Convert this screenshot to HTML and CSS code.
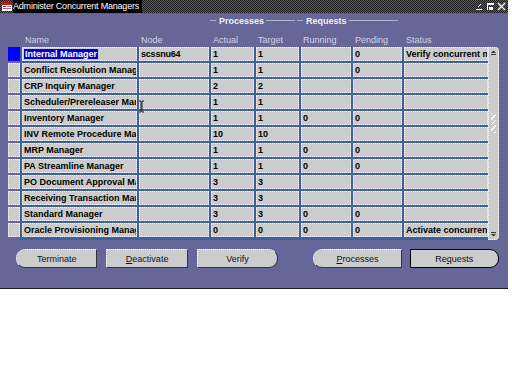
FILE: index.html
```html
<!DOCTYPE html>
<html lang="en">

<head>
    <meta charset="UTF-8">
    <title>Administer Concurrent Managers</title>
    <link rel="stylesheet" href="styles.css">
</head>

<body>
    <div class="window">
        <div class="titlebar">
            <svg class="title-icon" width="10" height="9" viewBox="0 0 10 9">
                <rect x="0" y="0" width="10" height="9" fill="#ffffff"/>
                <rect x="0" y="0" width="10" height="3" fill="#d01010"/>
                <rect x="1" y="4" width="3" height="1" fill="#d01010"/>
                <rect x="5" y="4" width="4" height="1" fill="#808080"/>
                <rect x="1" y="6" width="8" height="1" fill="#808080"/>
            </svg>
            <span class="title">Administer Concurrent Managers</span>
            <div class="controls">
                <svg width="9" height="9" viewBox="0 0 9 9"><rect x="1" y="7" width="6" height="1" fill="#fff"/><path d="M6 2 L3 5" stroke="#fff" stroke-width="1"/></svg>
                <svg width="9" height="9" viewBox="0 0 9 9"><rect x="1" y="1" width="7" height="2" fill="#fff"/><rect x="1" y="3" width="1" height="5" fill="#fff"/><rect x="3" y="5" width="4" height="3" fill="#fff"/></svg>
                <svg width="9" height="9" viewBox="0 0 9 9"><path d="M1 1 L8 8 M8 1 L1 8" stroke="#fff" stroke-width="1.4"/></svg>
            </div>
        </div>

        <div class="head">
            <div class="group processes"><span class="dash"></span><span class="group-name">Processes</span><span class="line"></span></div>
            <div class="group requests"><span class="dash"></span><span class="group-name">Requests</span><span class="line"></span></div>

            <div class="label-spacer"></div>
            <div class="label name-col">Name</div>
            <div class="label">Node</div>
            <div class="label">Actual</div>
            <div class="label">Target</div>
            <div class="label">Running</div>
            <div class="label">Pending</div>
            <div class="label">Status</div>
        </div>

        <div class="rows">
            <div class="indicators">
                <div class="ind current"></div>
                <div class="ind"></div><div class="ind"></div><div class="ind"></div>
                <div class="ind"></div><div class="ind"></div><div class="ind"></div>
                <div class="ind"></div><div class="ind"></div><div class="ind"></div>
                <div class="ind"></div><div class="ind"></div>
            </div>

            <div class="table">
                <div class="cell"><span class="sel">Internal Manager</span></div><div class="cell node">scssnu64</div><div class="cell">1</div><div class="cell">1</div><div class="cell"></div><div class="cell">0</div><div class="cell">Verify concurrent managers status</div>
                <div class="cell">Conflict Resolution Manager</div><div class="cell"></div><div class="cell">1</div><div class="cell">1</div><div class="cell"></div><div class="cell">0</div><div class="cell"></div>
                <div class="cell">CRP Inquiry Manager</div><div class="cell"></div><div class="cell">2</div><div class="cell">2</div><div class="cell"></div><div class="cell"></div><div class="cell"></div>
                <div class="cell">Scheduler/Prereleaser Manager</div><div class="cell"></div><div class="cell">1</div><div class="cell">1</div><div class="cell"></div><div class="cell"></div><div class="cell"></div>
                <div class="cell">Inventory Manager</div><div class="cell"></div><div class="cell">1</div><div class="cell">1</div><div class="cell">0</div><div class="cell">0</div><div class="cell"></div>
                <div class="cell">INV Remote Procedure Manager</div><div class="cell"></div><div class="cell">10</div><div class="cell">10</div><div class="cell"></div><div class="cell"></div><div class="cell"></div>
                <div class="cell">MRP Manager</div><div class="cell"></div><div class="cell">1</div><div class="cell">1</div><div class="cell">0</div><div class="cell">0</div><div class="cell"></div>
                <div class="cell">PA Streamline Manager</div><div class="cell"></div><div class="cell">1</div><div class="cell">1</div><div class="cell">0</div><div class="cell">0</div><div class="cell"></div>
                <div class="cell">PO Document Approval Manager</div><div class="cell"></div><div class="cell">3</div><div class="cell">3</div><div class="cell"></div><div class="cell"></div><div class="cell"></div>
                <div class="cell">Receiving Transaction Manager</div><div class="cell"></div><div class="cell">3</div><div class="cell">3</div><div class="cell"></div><div class="cell"></div><div class="cell"></div>
                <div class="cell">Standard Manager</div><div class="cell"></div><div class="cell">3</div><div class="cell">3</div><div class="cell">0</div><div class="cell">0</div><div class="cell"></div>
                <div class="cell">Oracle Provisioning Manager</div><div class="cell"></div><div class="cell">0</div><div class="cell">0</div><div class="cell">0</div><div class="cell">0</div><div class="cell">Activate concurrent manager</div>
            </div>

            <div class="scrollbar">
                <svg class="arrow" width="9" height="7" viewBox="0 0 9 7"><path d="M2 4 L4.5 1.5 L7 4 Z" fill="#333"/><rect x="2" y="5" width="5" height="1" fill="#333"/></svg>
                <div class="grip"></div>
                <svg class="arrow down" width="9" height="7" viewBox="0 0 9 7"><rect x="2" y="1" width="5" height="1" fill="#333"/><path d="M2 3 L4.5 5.5 L7 3 Z" fill="#333"/></svg>
            </div>
        </div>

        <div class="buttons">
            <button class="btn first">Terminate</button>
            <button class="btn"><u>D</u>eactivate</button>
            <button class="btn last">Verify</button>
            <button class="btn first right-group"><u>P</u>rocesses</button>
            <button class="btn last default">Re<u>q</u>uests</button>
        </div>

        <svg class="cursor" width="7" height="13" viewBox="0 0 7 13">
            <path d="M1 1 H3 V12 H1 M6 1 H4 V12 H6" stroke="#222" stroke-width="1" fill="none"/>
        </svg>
    </div>
</body>

</html>
```

FILE: styles.css
```css
body {
    margin: 0;
    background-color: #ffffff;
    font-family: "Liberation Sans", Arial, sans-serif;
}

.window {
    position: relative;
    width: 508px;
    height: 288px;
    background-color: #666699;
    border-bottom: 1px solid #1a1a1a;
}

.titlebar {
    display: flex;
    align-items: center;
    height: 13px;
    background: repeating-conic-gradient(#5c5c5c 0 25%, #1c1c1c 0 50%) 0 0 / 2px 2px;
    border-bottom: 1px solid #3a7480;
}

.title-icon {
    margin: 0 1px 0 2px;
}

.title {
    background-color: #000000;
    color: #ffffff;
    font-size: 9px;
    line-height: 13px;
    padding-right: 3px;
    letter-spacing: -0.2px;
}

.controls {
    display: flex;
    gap: 2px;
    margin-left: auto;
    margin-right: 2px;
}

.head {
    display: grid;
    grid-template-columns: 12px 115px 70px 43px 43px 50px 49px 84px;
    grid-template-rows: 11px 12px;
    column-gap: 2px;
    row-gap: 8px;
    margin: 1px 0 0 8px;
}

.group {
    grid-row: 1;
    display: flex;
    align-items: center;
    color: #f0f0f8;
    font-size: 9px;
    font-weight: bold;
    margin-left: -1px;
}

.processes {
    grid-column: 4 / 6;
}

.requests {
    grid-column: 6 / 8;
    margin-left: -4px;
}

.dash {
    width: 6px;
    height: 1px;
    background-color: #a9b6cc;
    margin-right: 3px;
}

.line {
    flex: 1;
    height: 1px;
    background-color: #a9b6cc;
    margin: 0 4px 0 2px;
}

.label-spacer {
    grid-row: 2;
    grid-column: 1;
}

.label {
    grid-row: 2;
    color: #d4d4e4;
    font-size: 9px;
    line-height: 12px;
    padding-left: 2px;
}

.name-col {
    padding-left: 3px;
}

.rows {
    display: flex;
    margin-top: 1px;
}

.indicators {
    display: flex;
    flex-direction: column;
    gap: 2px;
    width: 12px;
    margin-left: 8px;
}

.ind {
    height: 14px;
    box-sizing: border-box;
    background-color: #cccccc;
    border: 1px dotted #f4f4f4;
}

.ind.current {
    background-color: #0000ff;
    border-color: #0000ff;
}

.table {
    display: grid;
    grid-template-columns: 115px 70px 43px 43px 50px 49px 84px;
    grid-auto-rows: 14px;
    gap: 2px;
    padding: 0 0 2px 2px;
    background-color: #40609a;
}

.cell {
    box-sizing: border-box;
    height: 14px;
    background-color: #cccccc;
    border: 1px dotted #f6f6f6;
    font-size: 9px;
    font-weight: bold;
    line-height: 12px;
    padding-left: 1px;
    white-space: nowrap;
    overflow: hidden;
    color: #000000;
}

.cell.node {
    letter-spacing: -0.2px;
}

.sel {
    background-color: #0000d0;
    color: #ffffff;
    padding: 0 1px;
}

.scrollbar {
    display: flex;
    flex-direction: column;
    align-items: center;
    box-sizing: border-box;
    width: 11px;
    height: 193px;
    background-color: #cccccc;
    border: 1px dotted #ffffff;
    border-radius: 0 4px 4px 0;
}

.arrow {
    margin: 1px 0;
}

.arrow.down {
    margin-top: auto;
}

.grip {
    width: 5px;
    height: 20px;
    margin-top: 56px;
    background: repeating-linear-gradient(135deg, #ffffff 0 1px, transparent 1px 4px);
}

.buttons {
    display: flex;
    margin: 9px 0 0 16px;
}

.btn {
    box-sizing: border-box;
    width: 82px;
    height: 19px;
    margin-right: 9px;
    padding: 0;
    background-color: #cccccc;
    border: 1px dotted #ffffff;
    border-right: 1px solid #333333;
    border-bottom: 1px solid #333333;
    font-family: "Liberation Sans", Arial, sans-serif;
    font-size: 9px;
    color: #111111;
}

.btn.first {
    border-radius: 9px 0 0 9px;
}

.btn.last {
    border-radius: 0 9px 9px 0;
}

.right-group {
    width: 89px;
    margin-left: 26px;
    margin-right: 8px;
}

.btn.default {
    width: 90px;
    border: 1px solid #000000;
}

.cursor {
    position: absolute;
    left: 138px;
    top: 100px;
}
```
